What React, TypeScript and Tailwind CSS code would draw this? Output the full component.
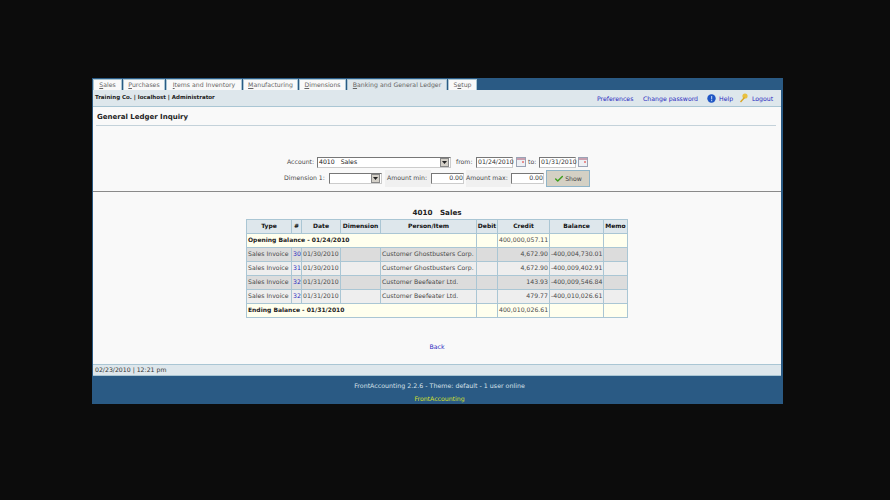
import React from 'react';
import { Check } from 'lucide-react';

const tabs = [
  { key: 'S', rest: 'ales', w: 'w-[29px]' },
  { key: 'P', rest: 'urchases', w: 'w-[42px]' },
  { key: 'I', rest: 'tems and Inventory', w: 'w-[76px]' },
  { key: 'M', rest: 'anufacturing', w: 'w-[55px]' },
  { key: 'D', rest: 'imensions', w: 'w-[47px]' },
  { key: 'B', rest: 'anking and General Ledger', w: 'w-[100px]', active: true },
  { key: 'S', rest: 'etup', w: 'w-[29px]', underline: 1 },
];

const rows = [
  { no: '30', date: '01/30/2010', person: 'Customer Ghostbusters Corp.', credit: '4,672.90', bal: '-400,004,730.01', odd: true },
  { no: '31', date: '01/30/2010', person: 'Customer Ghostbusters Corp.', credit: '4,672.90', bal: '-400,009,402.91', odd: false },
  { no: '32', date: '01/31/2010', person: 'Customer Beefeater Ltd.', credit: '143.93', bal: '-400,009,546.84', odd: true },
  { no: '32', date: '01/31/2010', person: 'Customer Beefeater Ltd.', credit: '479.77', bal: '-400,010,026.61', odd: false },
];

const th = 'border border-[#aac6d4] bg-[#dee7ec] font-bold text-center text-[#111] p-0 text-[6px]';
const td = 'border border-[#aac6d4] px-[1px] py-0 whitespace-nowrap';

const CalIcon = () => (
  <svg width="10" height="10" viewBox="0 0 10 10" className="shrink-0 -mt-[1px]">
    <rect x="0.5" y="0.5" width="9" height="9" fill="#eef0f4" stroke="#9aa3b5" />
    <rect x="1" y="1" width="8" height="2" fill="#c9a0b0" />
    <rect x="6" y="4" width="2" height="2" fill="#e89090" />
  </svg>
);

const SelectArrow = () => (
  <span className="flex items-center justify-center w-[9px] h-[9px] bg-[#d4d0c8] border border-[#888] mr-[1px]">
    <svg width="5" height="3" viewBox="0 0 5 3"><path d="M0 0h5L2.5 3z" fill="#222" /></svg>
  </span>
);

const inputCls = 'h-[11px] border border-t-[#777] border-l-[#777] border-b-[#ccc] border-r-[#ccc] bg-white text-[6.2px] leading-[9px] text-[#333] shrink-0';

export default function App() {
  return (
    <div className="w-[890px] h-[500px] bg-[#0c0c0c] pt-[78px] pl-[92px] overflow-hidden [text-rendering:geometricPrecision] font-['DejaVu_Sans',sans-serif] text-[6.2px] leading-[9px] text-[#4a4a4a]">
      <div className="w-[691px] h-[326px] bg-[#2a5a84] flex flex-col">
        {/* Tabs */}
        <div className="flex gap-[1px] h-[11px] mt-[1px] ml-[1px]">
          {tabs.map((t, i) => (
            <div
              key={i}
              className={`${t.w} flex items-center justify-center whitespace-nowrap border-t border-x border-[#aac6d4] ${t.active ? 'bg-[#dee7ec]' : 'bg-[#f9f9f9]'} text-[#666]`}
            >
              {t.underline ? (
                <span>S<span className="underline">e</span>tup</span>
              ) : (
                <span><span className="underline">{t.key}</span>{t.rest}</span>
              )}
            </div>
          ))}
        </div>

        <div className="ml-[1px] mr-[2px] flex-1 flex flex-col min-h-0">
          {/* Header bar */}
          <div className="h-[17px] bg-[#dee7ec] border-b border-[#aac6d4] flex items-start justify-between pl-[2px] pr-[8px] shrink-0">
            <span className="font-bold text-[5.5px] text-[#222] mt-[4px]">Training Co. | localhost | Administrator</span>
            <div className="flex items-center text-[#2a2ac0] whitespace-nowrap mt-[5px]">
              <span className="w-[37px]">Preferences</span>
              <span className="ml-[9px] w-[56px]">Change password</span>
              <svg width="9" height="9" viewBox="0 0 9 9" className="ml-[8px] -mt-[3px]">
                <circle cx="4.5" cy="4.5" r="4.2" fill="#1f56c4" />
                <rect x="4" y="2" width="1.2" height="3.4" fill="#a8c4ee" />
                <rect x="4" y="6" width="1.2" height="1.2" fill="#a8c4ee" />
              </svg>
              <span className="ml-[3px] w-[14px]">Help</span>
              <svg width="9" height="10" viewBox="0 0 9 10" className="ml-[6px] -mt-[3px]">
                <circle cx="6" cy="3" r="2.6" fill="#e8c040" />
                <path d="M5 4 1 8.5l1 1L6 5z" fill="#d9a520" />
              </svg>
              <span className="ml-[4px] w-[21px]">Logout</span>
            </div>
          </div>

          {/* Page body */}
          <div className="h-[257px] bg-[#f9f9f9] flex flex-col shrink-0">
            <div className="ml-[3px] mr-[5px] h-[19px] border-b border-[#c4d2da] text-[7px] leading-[9px] pt-[6px] font-bold text-[#222] shrink-0 pl-[1px]">
              General Ledger Inquiry
            </div>

            {/* Filters */}
            <div className="mt-[31px] h-[30px] flex flex-col items-start shrink-0">
              <div className="flex items-center h-[11px] ml-[194px] whitespace-nowrap">
                <span className="w-[30px]">Account:</span>
                <div className={`${inputCls} w-[134px] flex items-center justify-between`}>
                  <span className="pl-[1px] text-[#222]">4010&nbsp;&nbsp;&nbsp;Sales</span>
                  <SelectArrow />
                </div>
                <span className="ml-[5px] w-[20px]">from:</span>
                <div className={`${inputCls} w-[37px] pl-[1px] flex items-center`}>01/24/2010</div>
                <span className="ml-[3px]"><CalIcon /></span>
                <span className="ml-[2px] w-[11px]">to:</span>
                <div className={`${inputCls} w-[37px] pl-[1px] flex items-center`}>01/31/2010</div>
                <span className="ml-[2px]"><CalIcon /></span>
              </div>
              <div className="flex items-center h-[17px] ml-[191px] mt-[2px] whitespace-nowrap">
                <span className="w-[45px]">Dimension 1:</span>
                <div className={`${inputCls} w-[53px] flex items-center justify-end`}>
                  <SelectArrow />
                </div>
                <span className="ml-[3px] pl-[2px] bg-[#f0f0f0] h-[17px] w-[46px] flex items-center">Amount min:</span>
                <div className={`${inputCls} w-[33px] flex items-center justify-end`}>0.00</div>
                <span className="bg-[#f0f0f0] h-[17px] w-[45px] flex items-center ml-[2px]">Amount max:</span>
                <div className={`${inputCls} w-[33px] flex items-center justify-end`}>0.00</div>
                <button className="ml-[2px] w-[44px] h-[17px] bg-[#d4d0c4] border border-[#8fb4c8] flex items-center justify-center gap-[1px] text-[#444] text-[6.2px]">
                  <Check size={10} strokeWidth={3.5} className="text-[#3f9e1e]" />
                  Show
                </button>
              </div>
            </div>

            <div className="h-[1px] bg-[#8a8a8a] mt-[4px] shrink-0" />

            {/* Report */}
            <div className="mt-[16px] h-[10px] text-center font-bold text-[7.2px] leading-[10px] text-[#222] shrink-0 whitespace-pre">4010   Sales</div>

            <table className="ml-[153px] mt-[1px] w-[381px] table-fixed border-collapse text-[#4a4a4a] text-[6.2px] leading-[9px]">
              <colgroup>
                <col className="w-[45px]" />
                <col className="w-[10px]" />
                <col className="w-[39px]" />
                <col className="w-[40px]" />
                <col className="w-[96px]" />
                <col className="w-[21px]" />
                <col className="w-[52px]" />
                <col className="w-[54px]" />
                <col className="w-[24px]" />
              </colgroup>
              <thead>
                <tr className="h-[14px]">
                  {['Type', '#', 'Date', 'Dimension', 'Person/Item', 'Debit', 'Credit', 'Balance', 'Memo'].map((h) => (
                    <th key={h} className={th}>{h}</th>
                  ))}
                </tr>
              </thead>
              <tbody>
                <tr className="h-[14px] bg-[#ffffee]">
                  <td colSpan={5} className={`${td} font-bold text-[#222] text-[6px]`}>Opening Balance - 01/24/2010</td>
                  <td className={td} />
                  <td className={`${td} text-right`}>400,000,057.11</td>
                  <td className={td} />
                  <td className={td} />
                </tr>
                {rows.map((r, i) => (
                  <tr key={i} className={`h-[14px] ${r.odd ? 'bg-[#dcdcdc]' : 'bg-[#eeeeee]'}`}>
                    <td className={td}>Sales Invoice</td>
                    <td className={`${td} text-[#2a2ac0]`}>{r.no}</td>
                    <td className={td}>{r.date}</td>
                    <td className={td} />
                    <td className={td}>{r.person}</td>
                    <td className={td} />
                    <td className={`${td} text-right`}>{r.credit}</td>
                    <td className={`${td} text-right`}>{r.bal}</td>
                    <td className={td} />
                  </tr>
                ))}
                <tr className="h-[14px] bg-[#ffffee]">
                  <td colSpan={5} className={`${td} font-bold text-[#222] text-[6px]`}>Ending Balance - 01/31/2010</td>
                  <td className={td} />
                  <td className={`${td} text-right`}>400,010,026.61</td>
                  <td className={td} />
                  <td className={td} />
                </tr>
              </tbody>
            </table>

            <div className="mt-[25px] text-center text-[#2a2ac0] shrink-0">Back</div>
          </div>

          {/* Status bar */}
          <div className="h-[12px] bg-[#dee7ec] border-y border-[#aac6d4] flex items-center pl-[2px] text-[#333] shrink-0">
            02/23/2010 | 12:21 pm
          </div>
        </div>

        {/* Footer */}
        <div className="h-[28px] shrink-0 flex flex-col items-center -mt-[1px] pl-[4px] text-[#d8e2ea]">
          <div className="mt-[6px] h-[9px] text-[6.3px]">FrontAccounting 2.2.6 - Theme: default - 1 user online</div>
          <div className="mt-[4px] text-[#d6e02a]">FrontAccounting</div>
        </div>
      </div>
    </div>
  );
}
